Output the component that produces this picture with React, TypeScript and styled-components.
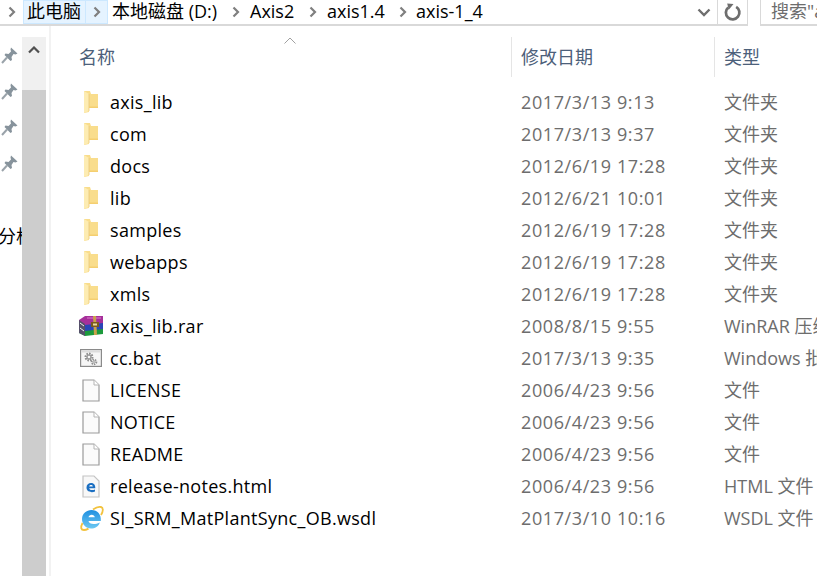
import React from 'react'
import styled, { createGlobalStyle } from 'styled-components'

const GlobalStyle = createGlobalStyle`
  html, body {
    margin: 0;
    padding: 0;
    background: #ffffff;
    overflow: hidden;
  }
`

const FONT = `'Open Sans', 'Noto Sans CJK SC', sans-serif`

const Window = styled.div`
  width: 817px;
  height: 576px;
  display: flex;
  flex-direction: column;
  overflow: hidden;
  background: #ffffff;
  font-family: ${FONT};
  font-size: 18px;
  color: #000000;
`

const TopBar = styled.div`
  height: 26px;
  flex: none;
  display: flex;
  box-sizing: border-box;
`

const AddressBox = styled.div`
  width: 748px;
  flex: none;
  display: flex;
  align-items: center;
  box-sizing: border-box;
  border-bottom: 2px solid #d9d9d9;
  border-right: 1px solid #d9d9d9;
`

const CrumbArrow = styled.span<{ $w: number; $active?: boolean }>`
  width: ${(p) => p.$w}px;
  height: 24px;
  box-sizing: border-box;
  display: grid;
  place-items: center;
  flex: none;
  background: ${(p) => (p.$active ? '#e5f3ff' : 'transparent')};
  border: 1px solid ${(p) => (p.$active ? '#cce8ff' : 'transparent')};
  border-left-width: ${(p) => (p.$active ? 0 : 1)}px;
`

const Crumb = styled.span<{ $w: number; $active?: boolean }>`
  width: ${(p) => p.$w}px;
  height: 24px;
  line-height: 20px;
  box-sizing: border-box;
  flex: none;
  white-space: nowrap;
  background: ${(p) => (p.$active ? '#e5f3ff' : 'transparent')};
  border: 1px solid ${(p) => (p.$active ? '#cce8ff' : 'transparent')};
  padding-left: ${(p) => (p.$active ? 3 : 0)}px;
`

const AddressEnd = styled.div`
  margin-left: auto;
  display: flex;
  align-items: center;
  height: 100%;
`

const DropCell = styled.span`
  width: 33px;
  height: 100%;
  display: grid;
  place-items: center;
  padding-left: 5px;
  box-sizing: border-box;
  border-right: 1px solid #d9d9d9;
`

const RefreshCell = styled.span`
  width: 29px;
  height: 100%;
  display: grid;
  place-items: center;
`

const SearchBox = styled.div`
  margin-left: 12px;
  flex: 1;
  box-sizing: border-box;
  border-left: 1px solid #d9d9d9;
  border-bottom: 2px solid #d9d9d9;
  padding-left: 10px;
  color: #6d6d6d;
  line-height: 23px;
  white-space: nowrap;
  overflow: hidden;
`

const Body = styled.div`
  flex: 1;
  display: flex;
  min-height: 0;
`

const NavPane = styled.div`
  width: 22px;
  flex: none;
  overflow: hidden;
  padding-top: 11px;
  box-sizing: border-box;
`

const PinSlot = styled.div`
  height: 36px;
  display: grid;
  place-items: center;
  padding-right: 4px;
  box-sizing: border-box;
`

const NavLabel = styled.div`
  margin-top: 43px;
  width: 60px;
  line-height: 24px;
  font-size: 18px;
  margin-left: -2px;
  white-space: nowrap;
`

const ScrollBar = styled.div`
  width: 24px;
  flex: none;
  background: #f0f0f0;
  display: flex;
  flex-direction: column;
  margin-top: 11px;
`

const ScrollUp = styled.div`
  height: 53px;
  box-sizing: border-box;
  display: flex;
  justify-content: center;
  align-items: flex-start;
  padding-top: 9px;
`

const ScrollThumb = styled.div`
  flex: 1;
  background: #cdcdcd;
`

const PaneRule = styled.div`
  width: 2px;
  flex: none;
  margin-left: 3px;
  background: #f2f2f2;
`

const Content = styled.div`
  flex: 1;
  min-width: 0;
  position: relative;
  padding-top: 11px;
`

const SortCaret = styled.svg`
  position: absolute;
  left: 232px;
  top: 11px;
`

const HeaderRow = styled.div`
  display: grid;
  grid-template-columns: 460px 203px 1fr;
  height: 40px;
  margin-bottom: 9px;
`

const HeaderCell = styled.div<{ $rule?: boolean }>`
  box-sizing: border-box;
  color: #4c607a;
  line-height: 40px;
  padding-left: ${(p) => (p.$rule ? 9 : 28)}px;
  border-left: ${(p) => (p.$rule ? '1px solid #e5e5e5' : 'none')};
  white-space: nowrap;
`

const FileRow = styled.div`
  display: grid;
  grid-template-columns: 460px 203px 1fr;
  height: 32px;
  align-items: center;
  white-space: nowrap;
`

const NameCell = styled.div`
  display: flex;
  align-items: center;
  height: 100%;
  letter-spacing: 0.3px;
`

const IconSlot = styled.span`
  width: 26px;
  height: 26px;
  margin-left: 27px;
  margin-right: 6px;
  display: grid;
  place-items: center;
  flex: none;
`

const DateCell = styled.div`
  padding-left: 10px;
  color: #6d6d6d;
  letter-spacing: 0.6px;
`

const TypeCell = styled.div`
  padding-left: 10px;
  color: #6d6d6d;
  overflow: hidden;
  margin-top: -2px;
`

const FolderIcon = () => (
  <svg width="14" height="22" viewBox="0 0 14 22">
    <path d="M0 0 H6 L7 3 H14 V17 H5 V21 L0 22 Z" fill="#f9dd8c" />
    <path d="M0 0 L5 3 V20 L0 22 Z" fill="#fdecb2" />
    <path d="M5 3 V20" stroke="#e8c878" strokeWidth="0.8" />
    <path d="M5 15.5 H14 V17 H5 Z" fill="#f5cf70" />
  </svg>
)

const RarIcon = () => (
  <svg width="24" height="20" viewBox="0 0 24 20">
    <path d="M0 14 L5 12 H24 V18 L6 20 L0 17 Z" fill="#1c9a3c" />
    <path d="M0 9 L5 7 H24 V13 L6 15 L0 12 Z" fill="#2b45b8" />
    <path d="M0 4 L6 0 H24 V7 L6 9 L0 7 Z" fill="#a6309a" />
    <path d="M0 4 L6 8 V20 L0 17 Z" fill="#55506a" />
    <path d="M1 7 L5 10 M1 12 L5 15" stroke="#f0f0f0" strokeWidth="1" />
    <path d="M8 2 H22" stroke="#e07ad0" strokeWidth="1" />
    <path d="M14 0 H17 L18 19 H15 Z" fill="#c9a24a" />
    <rect x="12" y="6" width="8" height="5" fill="#7a5a1f" />
    <rect x="14" y="7.5" width="4" height="2" fill="#e9d9a0" />
  </svg>
)

const BatIcon = () => (
  <svg width="22" height="18" viewBox="0 0 22 18">
    <rect x="0.6" y="0.6" width="20.8" height="16.8" fill="#f6f6f6" stroke="#8a8a8a" strokeWidth="1.2" />
    <rect x="1.5" y="1.5" width="19" height="2" fill="#dcdcdc" />
    <circle cx="9" cy="8" r="3.4" fill="none" stroke="#8f8f8f" strokeWidth="2.2" strokeDasharray="1.6 1" />
    <circle cx="9" cy="8" r="2" fill="none" stroke="#9a9a9a" strokeWidth="1.4" />
    <circle cx="14" cy="13" r="2.4" fill="none" stroke="#8f8f8f" strokeWidth="1.8" strokeDasharray="1.3 0.9" />
    <circle cx="14" cy="13" r="1.2" fill="none" stroke="#9a9a9a" strokeWidth="0.9" />
  </svg>
)

const PageIcon = () => (
  <svg width="18" height="23" viewBox="0 0 18 23">
    <path d="M1 1 H12 L17 6 V22 H1 Z" fill="#fbfbfb" stroke="#9b9b9b" strokeWidth="1.2" />
    <path d="M12 1 V6 H17" fill="#ffffff" stroke="#b5b5b5" strokeWidth="1" />
  </svg>
)

const HtmlIcon = () => (
  <svg width="18" height="23" viewBox="0 0 18 23">
    <path d="M1 1 H12 L17 6 V22 H1 Z" fill="#f8f8f8" stroke="#c4c4c4" strokeWidth="1.2" />
    <path
      d="M4.5 12.5 C4.5 9.5 6.5 8 9 8 C11.6 8 13.5 9.7 13.3 13.2 H7.2 C7.4 15.2 10.6 15.6 13 14.4 V16.6 C9.5 18 4.5 17 4.5 12.5 Z M7.2 11.4 H10.8 C10.7 9.5 7.5 9.5 7.2 11.4 Z"
      fill="#1b6fc2"
      fillRule="evenodd"
    />
  </svg>
)

const IeIcon = () => (
  <svg width="25" height="25" viewBox="0 0 25 25">
    <defs>
      <linearGradient id="ie-blue" x1="0" y1="0" x2="0" y2="1">
        <stop offset="0" stopColor="#1f8fe0" />
        <stop offset="1" stopColor="#6cc8f2" />
      </linearGradient>
    </defs>
    <path
      d="M3 13 C3 7.5 7.5 4 12.5 4 C18.5 4 22.5 8.5 21.8 15 H9.5 C10 18.5 15.8 19 20.8 16.5 C19.5 20.5 16 22.5 12 22.5 C7 22.5 3 18.5 3 13 Z M9.5 11.2 H15.8 C15.5 7.8 10 7.8 9.5 11.2 Z"
      fill="url(#ie-blue)"
      fillRule="evenodd"
    />
    <path d="M3.5 17 C1.2 21.5 2 24 5 24 C6.5 24 8 23.4 9.5 22.6" fill="none" stroke="#f2c23e" strokeWidth="1.8" />
    <path d="M14 3.5 C17 1.5 20 0.6 22 1 C24.6 1.6 24.2 5.5 22 9" fill="none" stroke="#f2c23e" strokeWidth="1.8" />
  </svg>
)

const PinIcon = () => (
  <svg width="17" height="17" viewBox="0 0 17 17">
    <path d="M10 0.5 L16.5 6.5 L14.5 7.5 L12.5 7 L10.5 10 L11 13 L9.5 14 L3.5 8 L4.5 6.5 L7.5 7 L10 4.5 L9.5 2.5 Z" fill="#87939c" />
    <path d="M6 10.5 L1 16" stroke="#9aa3aa" strokeWidth="2" />
  </svg>
)

const ArrowRight = () => (
  <svg width="8" height="12" viewBox="0 0 8 12">
    <path d="M1.5 1.5 L6 6 L1.5 10.5" fill="none" stroke="#7f7f7f" strokeWidth="2.2" />
  </svg>
)

type Kind = 'folder' | 'rar' | 'bat' | 'page' | 'html' | 'ie'

const ICONS: Record<Kind, React.ReactNode> = {
  folder: <FolderIcon />,
  rar: <RarIcon />,
  bat: <BatIcon />,
  page: <PageIcon />,
  html: <HtmlIcon />,
  ie: <IeIcon />,
}

const FILES: { name: string; date: string; type: string; kind: Kind }[] = [
  { name: 'axis_lib', date: '2017/3/13 9:13', type: '文件夹', kind: 'folder' },
  { name: 'com', date: '2017/3/13 9:37', type: '文件夹', kind: 'folder' },
  { name: 'docs', date: '2012/6/19 17:28', type: '文件夹', kind: 'folder' },
  { name: 'lib', date: '2012/6/21 10:01', type: '文件夹', kind: 'folder' },
  { name: 'samples', date: '2012/6/19 17:28', type: '文件夹', kind: 'folder' },
  { name: 'webapps', date: '2012/6/19 17:28', type: '文件夹', kind: 'folder' },
  { name: 'xmls', date: '2012/6/19 17:28', type: '文件夹', kind: 'folder' },
  { name: 'axis_lib.rar', date: '2008/8/15 9:55', type: 'WinRAR 压缩文件', kind: 'rar' },
  { name: 'cc.bat', date: '2017/3/13 9:35', type: 'Windows 批处理文件', kind: 'bat' },
  { name: 'LICENSE', date: '2006/4/23 9:56', type: '文件', kind: 'page' },
  { name: 'NOTICE', date: '2006/4/23 9:56', type: '文件', kind: 'page' },
  { name: 'README', date: '2006/4/23 9:56', type: '文件', kind: 'page' },
  { name: 'release-notes.html', date: '2006/4/23 9:56', type: 'HTML 文件', kind: 'html' },
  { name: 'SI_SRM_MatPlantSync_OB.wsdl', date: '2017/3/10 10:16', type: 'WSDL 文件', kind: 'ie' },
]

export default function App() {
  return (
    <Window>
      <GlobalStyle />
      <TopBar>
        <AddressBox>
          <CrumbArrow $w={23}>
            <ArrowRight />
          </CrumbArrow>
          <Crumb $w={63} $active>此电脑</Crumb>
          <CrumbArrow $w={22} $active>
            <ArrowRight />
          </CrumbArrow>
          <Crumb $w={3} />
          <Crumb $w={112}>本地磁盘 (D:)</Crumb>
          <CrumbArrow $w={26}>
            <ArrowRight />
          </CrumbArrow>
          <Crumb $w={51}>Axis2</Crumb>
          <CrumbArrow $w={26}>
            <ArrowRight />
          </CrumbArrow>
          <Crumb $w={64}>axis1.4</Crumb>
          <CrumbArrow $w={25}>
            <ArrowRight />
          </CrumbArrow>
          <Crumb $w={74}>axis-1_4</Crumb>
          <AddressEnd>
            <DropCell>
              <svg width="14" height="9" viewBox="0 0 14 9">
                <path d="M1.5 1.5 L7 7 L12.5 1.5" fill="none" stroke="#6e6e6e" strokeWidth="2.4" />
              </svg>
            </DropCell>
            <RefreshCell>
              <svg width="18" height="19" viewBox="0 0 17 18">
                <path d="M11.5 3.6 A6.4 6.4 0 1 1 4 4.2" fill="none" stroke="#6e6e6e" strokeWidth="2.6" />
                <path d="M3 0.5 L9 1 L4.5 6.5 Z" fill="#6e6e6e" />
              </svg>
            </RefreshCell>
          </AddressEnd>
        </AddressBox>
        <SearchBox>搜索"axis-1_4"</SearchBox>
      </TopBar>
      <Body>
        <NavPane>
          <PinSlot><PinIcon /></PinSlot>
          <PinSlot><PinIcon /></PinSlot>
          <PinSlot><PinIcon /></PinSlot>
          <PinSlot><PinIcon /></PinSlot>
          <NavLabel>分析</NavLabel>
        </NavPane>
        <ScrollBar>
          <ScrollUp>
            <svg width="12" height="8" viewBox="0 0 12 8">
              <path d="M1 6.5 L6 1.5 L11 6.5" fill="none" stroke="#505050" strokeWidth="2.2" />
            </svg>
          </ScrollUp>
          <ScrollThumb />
        </ScrollBar>
        <PaneRule />
        <Content>
          <SortCaret width="14" height="8" viewBox="0 0 14 8">
            <path d="M1.5 6.5 L7 1 L12.5 6.5" fill="none" stroke="#a0a0a0" strokeWidth="1" />
          </SortCaret>
          <HeaderRow>
            <HeaderCell>名称</HeaderCell>
            <HeaderCell $rule>修改日期</HeaderCell>
            <HeaderCell $rule>类型</HeaderCell>
          </HeaderRow>
          {FILES.map((file) => (
            <FileRow key={file.name}>
              <NameCell>
                <IconSlot>{ICONS[file.kind]}</IconSlot>
                {file.name}
              </NameCell>
              <DateCell>{file.date}</DateCell>
              <TypeCell>{file.type}</TypeCell>
            </FileRow>
          ))}
        </Content>
      </Body>
    </Window>
  )
}
